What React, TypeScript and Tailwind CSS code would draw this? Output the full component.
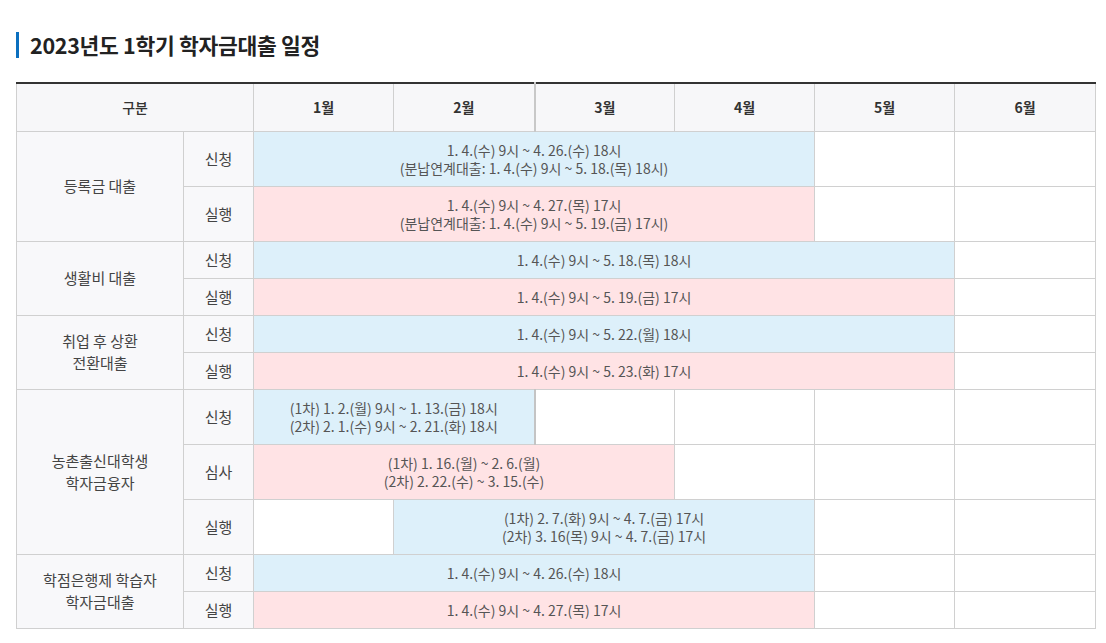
import React from 'react';

type Cell = { span: number; text?: string[]; tone?: 'blue' | 'pink' | 'none'; strong?: boolean };
type Row = { group?: string[]; groupSpan?: number; label: string; cells: Cell[]; tall?: boolean };

const rows: Row[] = [
  {
    group: ['등록금 대출'],
    groupSpan: 2,
    label: '신청',
    tall: true,
    cells: [
      { span: 4, tone: 'blue', text: ['1. 4.(수) 9시 ~ 4. 26.(수) 18시', '(분납연계대출: 1. 4.(수) 9시 ~ 5. 18.(목) 18시)'] },
      { span: 1 },
      { span: 1 },
    ],
  },
  {
    label: '실행',
    tall: true,
    cells: [
      { span: 4, tone: 'pink', text: ['1. 4.(수) 9시 ~ 4. 27.(목) 17시', '(분납연계대출: 1. 4.(수) 9시 ~ 5. 19.(금) 17시)'] },
      { span: 1 },
      { span: 1 },
    ],
  },
  {
    group: ['생활비 대출'],
    groupSpan: 2,
    label: '신청',
    cells: [{ span: 5, tone: 'blue', text: ['1. 4.(수) 9시 ~ 5. 18.(목) 18시'] }, { span: 1 }],
  },
  { label: '실행', cells: [{ span: 5, tone: 'pink', text: ['1. 4.(수) 9시 ~ 5. 19.(금) 17시'] }, { span: 1 }] },
  {
    group: ['취업 후 상환', '전환대출'],
    groupSpan: 2,
    label: '신청',
    cells: [{ span: 5, tone: 'blue', text: ['1. 4.(수) 9시 ~ 5. 22.(월) 18시'] }, { span: 1 }],
  },
  { label: '실행', cells: [{ span: 5, tone: 'pink', text: ['1. 4.(수) 9시 ~ 5. 23.(화) 17시'] }, { span: 1 }] },
  {
    group: ['농촌출신대학생', '학자금융자'],
    groupSpan: 3,
    label: '신청',
    tall: true,
    cells: [
      { span: 2, tone: 'blue', strong: true, text: ['(1차) 1. 2.(월) 9시 ~ 1. 13.(금) 18시', '(2차) 2. 1.(수) 9시 ~ 2. 21.(화) 18시'] },
      { span: 1 },
      { span: 1 },
      { span: 1 },
      { span: 1 },
    ],
  },
  {
    label: '심사',
    tall: true,
    cells: [
      { span: 3, tone: 'pink', text: ['(1차) 1. 16.(월) ~ 2. 6.(월)', '(2차) 2. 22.(수) ~ 3. 15.(수)'] },
      { span: 1 },
      { span: 1 },
      { span: 1 },
    ],
  },
  {
    label: '실행',
    tall: true,
    cells: [
      { span: 1 },
      { span: 3, tone: 'blue', text: ['(1차) 2. 7.(화) 9시 ~ 4. 7.(금) 17시', '(2차) 3. 16(목) 9시 ~ 4. 7.(금) 17시'] },
      { span: 1 },
      { span: 1 },
    ],
  },
  {
    group: ['학점은행제 학습자', '학자금대출'],
    groupSpan: 2,
    label: '신청',
    cells: [{ span: 4, tone: 'blue', text: ['1. 4.(수) 9시 ~ 4. 26.(수) 18시'] }, { span: 1 }, { span: 1 }],
  },
  { label: '실행', cells: [{ span: 4, tone: 'pink', text: ['1. 4.(수) 9시 ~ 4. 27.(목) 17시'] }, { span: 1 }, { span: 1 }] },
];

const months = ['1월', '2월', '3월', '4월', '5월', '6월'];

const App: React.FC = () => {
  return (
    <div
      className="min-h-[643px] bg-white pl-4 pr-[11px] pt-8 text-[#555]"
      style={{ fontFamily: '"Noto Sans CJK KR", "Noto Sans", sans-serif' }}
    >
      <h2 className="flex h-[26px] items-center border-l-[3px] border-[#0b6fbf] pl-[11px] text-[21.5px] font-bold leading-[26px] tracking-[-0.3px] text-[#222]">
        2023년도 1학기 학자금대출 일정
      </h2>

      <table className="mt-6 w-[1079px] table-fixed border-collapse border-t-2 border-t-[#333] text-center text-[14px] leading-[18px]">
        <colgroup>
          <col className="w-[167px]" />
          <col className="w-[70px]" />
          <col className="w-[140px]" />
          <col className="w-[141px]" />
          <col className="w-[140px]" />
          <col className="w-[140px]" />
          <col className="w-[140px]" />
          <col className="w-[141px]" />
        </colgroup>
        <thead>
          <tr className="h-[48px] bg-[#f7f7f9] text-[#333]">
            <th colSpan={2} className="border border-[#d0d0d0] font-medium">구분</th>
            {months.map((m, i) => (
              <th
                key={m}
                className={`border border-[#d0d0d0] font-bold ${i === 2 ? 'border-l-2 border-l-[#c8c8c8]' : ''}`}
              >
                {m}
              </th>
            ))}
          </tr>
        </thead>
        <tbody>
          {rows.map((row, idx) => (
            <tr key={idx} className={row.tall ? 'h-[55px]' : 'h-[37px]'}>
              {row.group && (
                <td rowSpan={row.groupSpan} className="border border-[#d0d0d0] bg-[#f8f8fa] text-[15px] leading-[22px] text-[#444]">
                  {row.group.map((g) => (
                    <div key={g}>{g}</div>
                  ))}
                </td>
              )}
              <td className="border border-[#d0d0d0] bg-[#f8f8fa] text-[15px] text-[#444]">{row.label}</td>
              {row.cells.map((c, ci) => (
                <td
                  key={ci}
                  colSpan={c.span}
                  className={`border border-[#d0d0d0] px-2 py-2 ${
                    c.tone === 'blue' ? 'bg-[#ddf0fa]' : c.tone === 'pink' ? 'bg-[#ffe3e5]' : 'bg-white'
                  } ${c.strong ? 'border-r-2 border-r-[#c4c4c4]' : ''}`}
                >
                  {c.text?.map((t) => (
                    <div key={t}>{t}</div>
                  ))}
                </td>
              ))}
            </tr>
          ))}
        </tbody>
      </table>
    </div>
  );
};

export default App;
